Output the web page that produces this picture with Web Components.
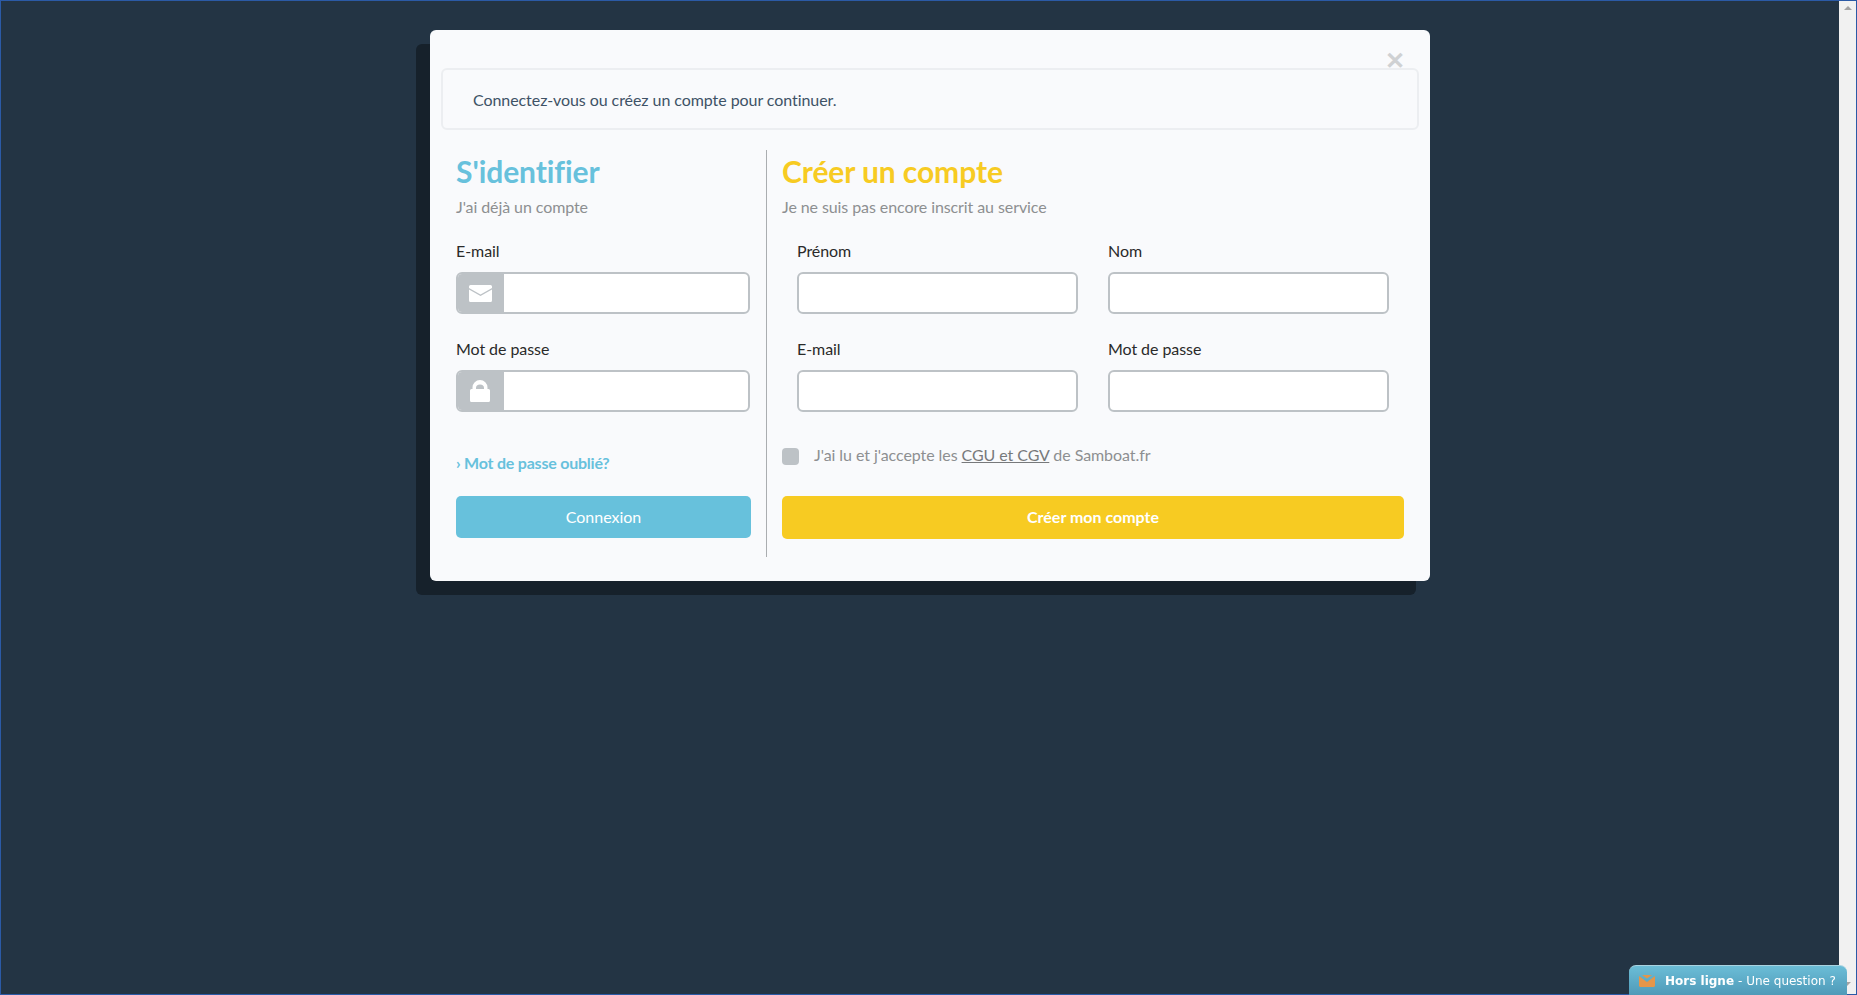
<!DOCTYPE html>
<html lang="fr">
  <head>
    <meta charset="UTF-8" />
    <title>Samboat</title>
    <style>
      html, body { margin: 0; height: 100%; overflow: hidden; }
      body { font-family: Lato, "Liberation Sans", sans-serif; }
    </style>
  </head>

  <body>
    <app-frame>
      <login-modal>
        <alert-box>Connectez-vous ou créez un compte pour continuer.</alert-box>
        <div slot="left">
          <form-heading color="#67c1dc" sub="J'ai déjà un compte">S'identifier</form-heading>
          <form-field label="E-mail" icon="mail"></form-field>
          <form-field label="Mot de passe" icon="lock"></form-field>
          <forgot-link>› Mot de passe oublié?</forgot-link>
          <action-button color="#67c1dc" weight="400" height="42">Connexion</action-button>
        </div>
        <div slot="right">
          <form-heading color="#f7cb22" sub="Je ne suis pas encore inscrit au service">Créer un compte</form-heading>
          <field-grid>
            <form-field label="Prénom"></form-field>
            <form-field label="Nom"></form-field>
            <form-field label="E-mail"></form-field>
            <form-field label="Mot de passe"></form-field>
          </field-grid>
          <terms-check></terms-check>
          <action-button color="#f7cb22" weight="700" height="43">Créer mon compte</action-button>
        </div>
      </login-modal>
    </app-frame>
    <chat-tab></chat-tab>

    <script>
      function component(name, html, init) {
        customElements.define(name, class extends HTMLElement {
          constructor() {
            super();
            this.attachShadow({ mode: "open" }).innerHTML = html;
          }
          connectedCallback() {
            if (init) init(this, this.shadowRoot);
          }
        });
      }

      component("app-frame", `
        <style>
          :host { display: flex; height: 995px; box-sizing: border-box; border: 1px solid #2b5aa6; background: #233444; }
          main { flex: 1; min-width: 0; padding: 29px 0 0 429px; }
          .bar { width: 17px; background: #f1f1f1; position: relative; }
          .up { width: 0; height: 0; margin: 5px auto 0; border: 4px solid transparent; border-top: 0; border-bottom: 4px solid #a3a3a3; }
          .down { width: 0; height: 0; position: absolute; left: 4px; bottom: 8px; border: 4px solid transparent; border-bottom: 0; border-top: 4px solid #a3a3a3; }
        </style>
        <main><slot></slot></main>
        <div class="bar"><div class="up"></div><div class="down"></div></div>
      `);

      component("login-modal", `
        <style>
          :host { display: block; position: relative; width: 1000px; height: 551px; box-sizing: border-box; padding: 38px 11px 0; background: #f9fafc; border-radius: 6px; box-shadow: -14px 14px 0 0 #16212b; }
          .close { position: absolute; top: 19px; right: 25px; font: 700 24px/24px "Liberation Sans", sans-serif; color: #cfd1d3; }
          .cols { display: flex; margin-top: 20px; }
          .left { width: 326px; flex: none; box-sizing: border-box; padding: 0 0 0 15px; border-right: 1px solid #aaadb0; height: 407px; }
          .right { flex: 1; min-width: 0; padding: 0 15px; }
        </style>
        <slot></slot>
        <div class="close">✕</div>
        <div class="cols">
          <div class="left"><slot name="left"></slot></div>
          <div class="right"><slot name="right"></slot></div>
        </div>
      `);

      component("alert-box", `
        <style>
          :host { display: block; height: 62px; box-sizing: border-box; border: 2px solid #eceef1; border-radius: 6px; padding: 0 30px; font-size: 16px; line-height: 60px; letter-spacing: -0.07px; color: #3e5266; }
        </style>
        <slot></slot>
      `);

      component("form-heading", `
        <style>
          :host { display: block; height: 89px; padding-top: 1px; box-sizing: border-box; }
          h2 { margin: 0 0 4px; font: 700 30px/40px Lato, sans-serif; letter-spacing: -0.08px; }
          p { margin: 0; font-size: 16px; line-height: 24px; letter-spacing: -0.09px; color: #8d8f91; }
        </style>
        <h2><slot></slot></h2>
        <p></p>
      `, (el, root) => {
        root.querySelector("h2").style.color = el.getAttribute("color");
        root.querySelector("p").textContent = el.getAttribute("sub");
      });

      const icons = {
        mail: `<svg width="23" height="17" viewBox="0 0 23 17"><path fill="#fff" d="M1.500 0h20A1.500 1.500 0 0 1 23 1.500V3L11.500 9.500 0 3V1.500A1.500 1.500 0 0 1 1.500 0zM0 4.500L11.500 11 23 4.500v11a1.500 1.500 0 0 1-1.500 1.500h-20A1.500 1.500 0 0 1 0 15.500z"/></svg>`,
        lock: `<svg width="20" height="22" viewBox="0 0 20 22"><path fill="#fff" fill-rule="evenodd" d="M2.500 9V7.500a7.500 7.500 0 0 1 15 0V9h1A1.500 1.500 0 0 1 20 10.500v10a1.500 1.500 0 0 1-1.500 1.500h-17A1.500 1.500 0 0 1 0 20.500v-10A1.500 1.500 0 0 1 1.500 9zM6 9h8V8a4 3.500 0 0 0-8 0z"/></svg>`
      };

      component("form-field", `
        <style>
          :host { display: block; height: 98px; }
          :host([icon]) { width: 294px; }
          label { display: block; font-size: 16px; line-height: 24px; letter-spacing: -0.07px; color: #2a2a2a; margin-bottom: 9px; }
          .box { display: flex; height: 42px; box-sizing: border-box; border: 2px solid #bdc2c6; border-radius: 6px; background: #fff; overflow: hidden; }
          .addon { display: none; flex: none; width: 48px; margin: -2px 0 -2px -2px; background: #bdc2c6; align-items: center; justify-content: center; }
          input { flex: 1; min-width: 0; border: 0; outline: 0; background: transparent; padding: 0 10px; }
        </style>
        <label></label>
        <div class="box"><span class="addon"></span><input type="text" /></div>
      `, (el, root) => {
        root.querySelector("label").textContent = el.getAttribute("label");
        const icon = el.getAttribute("icon");
        if (icon) {
          const addon = root.querySelector(".addon");
          addon.innerHTML = icons[icon];
          addon.style.display = "flex";
        }
      });

      component("field-grid", `
        <style>
          :host { display: grid; grid-template-columns: 281px 281px; column-gap: 30px; padding-left: 15px; }
        </style>
        <slot></slot>
      `);

      component("forgot-link", `
        <style>
          :host { display: block; margin-top: 16px; height: 24px; font-size: 16px; font-weight: 700; line-height: 24px; letter-spacing: -0.22px; color: #67c1dc; margin-bottom: 21px; }
        </style>
        <slot></slot>
      `);

      component("action-button", `
        <style>
          :host { display: flex; align-items: center; justify-content: center; border-radius: 5px; color: #fff; font-size: 16px; box-sizing: border-box; padding-bottom: 2px; }
        </style>
        <slot></slot>
      `, (el) => {
        el.style.background = el.getAttribute("color");
        el.style.height = el.getAttribute("height") + "px";
        el.style.fontWeight = el.getAttribute("weight");
        if (el.getAttribute("weight") === "400") el.style.width = "295px";
      });

      component("terms-check", `
        <style>
          :host { display: flex; align-items: center; margin-top: 7px; height: 24px; margin-bottom: 30px; font-size: 16px; letter-spacing: -0.07px; color: #8d8f91; }
          .box { width: 17px; height: 17px; border-radius: 4px; background: #bdc2c6; margin-right: 15px; margin-top: 5px; }
          a { color: #77797b; text-decoration: underline; }
        </style>
        <span class="box"></span>
        <span>J'ai lu et j'accepte les <a>CGU et CGV</a> de Samboat.fr</span>
      `);

      component("chat-tab", `
        <style>
          :host { position: fixed; left: 1629px; top: 965px; width: 218px; height: 30px; box-sizing: border-box; display: flex; align-items: center; padding: 0 0 0 10px; border-radius: 7px 7px 0 0; border-top: 1px solid #a9d3e1; background: linear-gradient(#6bbdd7, #4f9ab8); color: #fff; font: 12px "DejaVu Sans", Verdana, sans-serif; white-space: nowrap; }
          svg { margin-right: 10px; flex: none; }
          b { margin-right: 4px; }
        </style>
        <svg width="16" height="12" viewBox="0 0 16 12"><path fill="#e4964a" d="M0 1l8 6 8-6v10l-1 1H1l-1-1z"/><path fill="#e4964a" d="M3 0h10L8 3.500z"/></svg>
        <b>Hors ligne</b><span>- Une question ?</span>
      `);
    </script>
  </body>
</html>
